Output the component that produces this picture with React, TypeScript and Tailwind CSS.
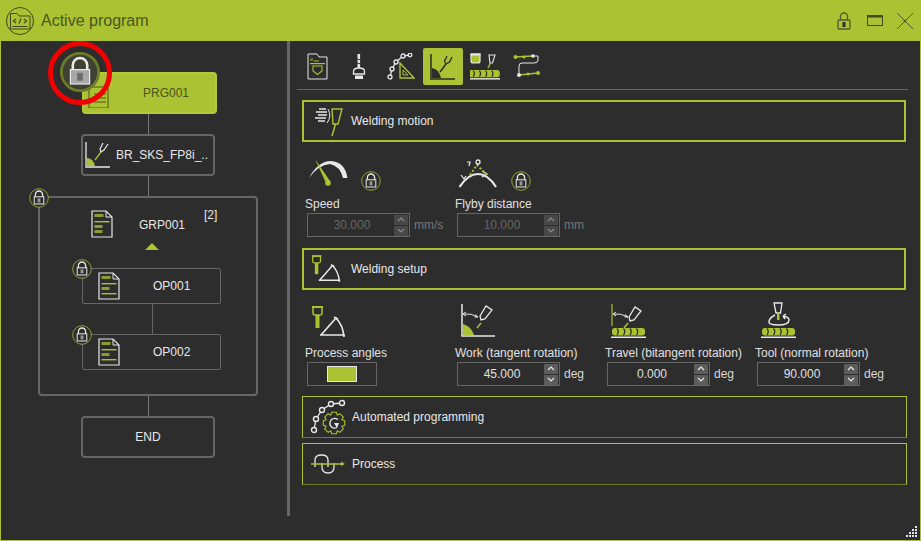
const GREEN = '#abc232';
const WHITE = '#e8e8e8';

const LockBadge = ({ size = 20, big = false }: { size?: number; big?: boolean }) => (
  <svg width={size} height={size} viewBox="0 0 20 20" fill="none">
    <circle cx="10" cy="10" r="9.300" stroke={big ? '#6d7a2a' : GREEN} strokeWidth={big ? 1.400 : 0.800} fill={big ? '#3e4032' : '#2d2d2d'} />
    <path d="M6.400 9V6.600a3.600 3.600 0 0 1 7.200 0V9" stroke={WHITE} strokeWidth="1.300" />
    <rect x="5.200" y="8.800" width="9.600" height="7.200" fill={big ? '#a8a8a8' : '#2d2d2d'} stroke={WHITE} strokeWidth={big ? 0.600 : 1} />
    <rect x="8.600" y="10.400" width="2.800" height="4" fill={big ? '#6c6c6c' : '#999'} />
  </svg>
);

const DocIcon = ({ group = false }: { group?: boolean }) => (
  <svg width="22" height="28" viewBox="0 0 22 28" fill="none">
    <path d="M1 1H15L21 7V27H1Z" fill="#2d2d2d" stroke={WHITE} strokeWidth="1.200" />
    <path d="M15 1V7H21" stroke={WHITE} strokeWidth="1" />
    <rect x="3.500" y="4" width="9" height="3" fill={GREEN} opacity="0.750" />
    <rect x="3.500" y="11" width="15" height="1.400" fill={GREEN} />
    <rect x="3.500" y="15" width="8" height="3" fill={GREEN} opacity="0.750" />
    {group ? (
      <rect x="3.500" y="20" width="8" height="3" fill={GREEN} opacity="0.750" />
    ) : (
      <rect x="3.500" y="21" width="15" height="1.400" fill={GREEN} />
    )}
  </svg>
);

const Bead = () => (
  <g>
    <rect x="1" y="-1" width="33" height="7.500" rx="3" fill={GREEN} />
    <path d="M6 -0.500q2.500 3 0 6.500M12.500 -0.500q2.500 3 0 6.500M19 -0.500q2.500 3 0 6.500M25.500 -0.500q2.500 3 0 6.500" stroke="#2d2d2d" strokeWidth="1.300" />
    <rect x="0" y="7.500" width="35" height="1.500" fill={WHITE} />
  </g>
);

const TabFolder = () => (
  <svg width="21" height="27" viewBox="0 0 21 27" fill="none">
    <path d="M1 26V1H10L12 4H20V26Z" stroke={WHITE} strokeWidth="1" />
    <path d="M3 7h1M5 5v3M7 8h5" stroke={GREEN} strokeWidth="1" />
    <rect x="3" y="10" width="15" height="1.200" fill={GREEN} />
    <path d="M6 13H15V18L10.500 21.500L6 18Z" stroke={GREEN} strokeWidth="1.100" />
  </svg>
);

const TabTorch = () => (
  <svg width="14" height="27" viewBox="0 0 14 27" fill="none">
    <rect x="5.500" y="1" width="2.600" height="14" fill={WHITE} />
    <path d="M5 6l4 1M5 10l4 1" stroke="#2d2d2d" strokeWidth="1" />
    <path d="M1.500 21V18.500Q1.500 15 7 15Q12.500 15 12.500 18.500V21Z" stroke={WHITE} strokeWidth="1.300" />
    <rect x="3" y="22.500" width="8" height="3.500" fill={WHITE} />
  </svg>
);

const TabPath = () => (
  <svg width="28" height="27" viewBox="0 0 28 27" fill="none">
    <g stroke={WHITE} strokeWidth="1.300" fill="#2d2d2d">
      <path d="M3 24L5 16L9 9L16 3L23 2" fill="none" />
      <circle cx="3" cy="24" r="2" />
      <circle cx="5" cy="16" r="2" />
      <circle cx="9" cy="9" r="2" />
      <circle cx="16" cy="3" r="2" />
      <circle cx="23" cy="2" r="1.800" />
    </g>
    <path d="M13 10V25H27Z" stroke={GREEN} strokeWidth="1.400" />
    <path d="M16 17V22H21Z" stroke={GREEN} strokeWidth="1" />
  </svg>
);

const TabWork = () => (
  <svg width="26" height="28" viewBox="0 0 26 28" fill="none">
    <path d="M1 1V26H25" stroke="#2d2d2d" strokeWidth="1.500" />
    <path d="M1.800 15Q9 16 11 25H1.800Z" fill="#2d2d2d" />
    <path d="M10 19L16 11" stroke="#2d2d2d" strokeWidth="1.500" />
    <path d="M16 11L14.500 8L17 3M16 11L19.500 9L22 4" stroke="#2d2d2d" strokeWidth="1.300" />
  </svg>
);

const TabWeld = () => (
  <svg width="30" height="28" viewBox="0 0 30 28" fill="none">
    <path d="M1 1H10V8Q10 10 8 10H3Q1 10 1 8Z" stroke={WHITE} strokeWidth="1.200" fill={GREEN} />
    <rect x="0.500" y="0.500" width="10" height="2" fill={WHITE} />
    <path d="M19 2H25L22.500 10H20Z" stroke={WHITE} strokeWidth="1.100" />
    <path d="M20.500 10L18 15" stroke={GREEN} strokeWidth="1.400" />
    <g transform="translate(-2.500 18) scale(0.950)">
      <Bead />
    </g>
  </svg>
);

const TabRoute = () => (
  <svg width="28" height="26" viewBox="0 0 28 26" fill="none">
    <path d="M20 2H25V6Q25 9 21 9H9Q6 9 6 12V20" stroke={WHITE} strokeWidth="1" />
    <path d="M1 3L20 2" stroke={GREEN} strokeWidth="1.300" />
    <circle cx="2.500" cy="3" r="2" fill={GREEN} />
    <circle cx="11" cy="3" r="1.500" fill={GREEN} />
    <circle cx="20" cy="2" r="1.800" fill={WHITE} />
    <path d="M6 21L25 19" stroke={GREEN} strokeWidth="1.300" />
    <circle cx="6" cy="21" r="2" fill={WHITE} />
    <circle cx="15" cy="20" r="1.500" fill={GREEN} />
    <circle cx="25" cy="19" r="2" fill={GREEN} />
  </svg>
);

const MotionIcon = () => (
  <svg width="32" height="31" viewBox="0 0 32 31" fill="none">
    <path d="M7 3H14M4 6H15M6 9H15M3 12H14M6 15H13" stroke={WHITE} strokeWidth="1.500" />
    <path d="M16 3Q20 10 15 17" stroke={WHITE} strokeWidth="1" />
    <path d="M20 3H30L26 18H21Z" stroke={GREEN} strokeWidth="1.400" />
    <path d="M23.500 18L20 30" stroke={GREEN} strokeWidth="1.500" />
  </svg>
);

const SetupIcon = ({ large = false }: { large?: boolean }) => (
  <svg width={large ? 36 : 31} height={large ? 32 : 28} viewBox="0 0 36 32" fill="none">
    <path d="M2 1H11V7Q11 9 9 9H4Q2 9 2 7Z" stroke={GREEN} strokeWidth="1.500" />
    <rect x="1" y="0" width="11" height="2" fill={GREEN} />
    <rect x="4.500" y="9" width="4" height="13" fill={GREEN} />
    <path d="M9 29H34M10 29L25 12M25 12Q32 19 33 31" stroke={WHITE} strokeWidth="1.700" />
    <path d="M23 11L27 13" stroke={WHITE} strokeWidth="1.500" />
  </svg>
);

const SpeedIcon = () => (
  <svg width="40" height="30" viewBox="0 0 40 30" fill="none">
    <path d="M0 19Q9 2 22 2Q36 3 38.500 19L34 19Q31 7 21 5Q9 6 0 19Z" fill={WHITE} />
    <path d="M6 0L21 22L17 24Z" fill={GREEN} />
    <circle cx="19" cy="24" r="2.800" fill={GREEN} />
  </svg>
);

const FlybyIcon = () => (
  <svg width="38" height="30" viewBox="0 0 38 30" fill="none">
    <path d="M0.500 28Q9 15 19 15Q29 15 37 28" stroke={WHITE} strokeWidth="2.200" />
    <path d="M23 12L28 15L23 18" stroke={WHITE} strokeWidth="1.300" />
    <path d="M11 16L18 6L28 16" stroke={GREEN} strokeWidth="2" strokeDasharray="2 2" />
    <circle cx="19" cy="3" r="2" stroke={WHITE} strokeWidth="1.300" />
    <path d="M8 3H11L10 7M2 16L5 20L7 17" stroke={WHITE} strokeWidth="1.200" />
  </svg>
);

const WorkIcon = () => (
  <svg width="34" height="34" viewBox="0 0 34 34" fill="none">
    <path d="M1 0V32H34" stroke={WHITE} strokeWidth="1.500" />
    <path d="M1.800 20Q10 22 13 31H1.800Z" fill={GREEN} />
    <path d="M2 10Q10 9 17 13M2 10l3-2M2 10l3 2M17 13l-3-2.500M17 13l-3.500 0" stroke={WHITE} strokeWidth="1" />
    <path d="M20 19L16 24" stroke={GREEN} strokeWidth="1.500" />
    <path d="M19 12L25 2L31 6L24 15L20 16Z" stroke={WHITE} strokeWidth="1.300" />
  </svg>
);

const TravelIcon = () => (
  <svg width="36" height="34" viewBox="0 0 36 34" fill="none">
    <path d="M1 0V22" stroke={GREEN} strokeWidth="1.200" />
    <path d="M2 10Q10 9 17 13M2 10l3-2M2 10l3 2M17 13l-3-2.500M17 13l-3.500 0" stroke={WHITE} strokeWidth="1" />
    <path d="M17 19L13 24" stroke={GREEN} strokeWidth="1.500" />
    <path d="M18 13L24 3L30 7L23 16L19 17Z" stroke={WHITE} strokeWidth="1.300" />
    <g transform="translate(0 25)">
      <Bead />
    </g>
  </svg>
);

const ToolIcon = () => (
  <svg width="36" height="36" viewBox="0 0 36 36" fill="none">
    <path d="M13 1H21L19.500 11H15Z" stroke={WHITE} strokeWidth="1.300" />
    <rect x="16" y="11" width="2.500" height="7" fill={GREEN} />
    <path d="M14 13Q8 16 8 20Q8 23 17 23Q28 23 28 18Q28 15 22 14M22 14l3-2M22 14l2 3" stroke={WHITE} strokeWidth="1.500" />
    <g transform="translate(0 27)">
      <Bead />
    </g>
  </svg>
);

// gear outline: 8 teeth around (cx, cy)
const gearPath = (cx: number, cy: number, outer: number, inner: number) => {
  const pts: string[] = [];
  for (let i = 0; i < 8; i++) {
    const a = (i * Math.PI) / 4;
    [[-0.39, inner], [-0.22, outer], [0.22, outer], [0.39, inner]].forEach(([d, r]) => {
      pts.push(`${(cx + r * Math.cos(a + d)).toFixed(2)} ${(cy + r * Math.sin(a + d)).toFixed(2)}`);
    });
  }
  return `M${pts.join('L')}Z`;
};

const AutoIcon = () => (
  <svg width="36" height="36" viewBox="0 0 36 36" fill="none">
    <path d="M4 31L6 20L12 11L21 5L32 4" stroke={WHITE} strokeWidth="1.300" />
    {[[4, 31], [6, 20], [12, 11], [21, 5], [32, 4]].map(([cx, cy]) => (
      <circle key={cx} cx={cx} cy={cy} r="2.500" stroke={WHITE} strokeWidth="1.400" fill="#2d2d2d" />
    ))}
    <path d={gearPath(24, 24, 11, 8.500)} stroke={GREEN} strokeWidth="1.100" fill="#2d2d2d" />
    <path d="M28 20.500Q24 18 21 21Q18.500 25 21.500 28Q24 30 27 28.500" stroke={WHITE} strokeWidth="1.300" />
    <path d="M24 24L29 24L27 29Z" fill={WHITE} />
  </svg>
);

const ProcessIcon = () => (
  <svg width="34" height="22" viewBox="0 0 34 22" fill="none">
    <path d="M4 14V7Q4 2 10.500 2Q17 2 17 7V14M11 10V14Q11 20 17 20Q23 20 23 14V10" stroke={WHITE} strokeWidth="1.300" />
    <path d="M0 11H31" stroke={GREEN} strokeWidth="1.500" />
    <path d="M30 8.500L34 11L30 13Z" fill={GREEN} />
  </svg>
);

const Chevron = ({ up, color }: { up: boolean; color: string }) => (
  <svg width="8" height="5" viewBox="0 0 8 5" fill="none">
    <path d={up ? 'M1 4L4 1L7 4' : 'M1 1L4 4L7 1'} stroke={color} strokeWidth="1.200" />
  </svg>
);

const Spin = ({ value, unit, disabled = false }: { value: string; unit: string; disabled?: boolean }) => (
  <div className="flex items-center mt-[2px]">
    <div className={`ml-[2px] flex items-center w-[103px] h-[24px] border border-[#666] ${disabled ? 'text-[#666]' : 'text-[#e0e0e0]'}`}>
      <span className="w-[86px] text-center pl-[2px]">{value}</span>
      <div className="flex flex-col gap-[1px]">
        {[true, false].map((up) => (
          <div key={String(up)} className={`flex items-center justify-center w-[14px] h-[10px] ${disabled ? 'bg-[#484848]' : 'bg-[#5c5c5c]'}`}>
            <Chevron up={up} color={disabled ? '#8a8a8a' : '#e8e8e8'} />
          </div>
        ))}
      </div>
    </div>
    <span className={`ml-[4px] ${disabled ? 'text-[#777]' : 'text-[#d8d8d8]'}`}>{unit}</span>
  </div>
);

const SectionHead = ({ icon, label, thin = false }: { icon: React.ReactNode; label: string; thin?: boolean }) => (
  <div className={`flex items-center h-[42px] border-[#abc232] ${thin ? 'w-[605px] border border-b-[#6e7a30]' : 'w-[604px] border-2'}`}>
    <div className={`flex items-center justify-center shrink-0 ${thin ? 'w-[49px]' : 'w-[47px]'}`}>{icon}</div>
    <span className="text-[#e8e8e8]">{label}</span>
  </div>
);

const Line = ({ h }: { h: string }) => <div className={`w-[1px] ml-[147px] bg-[#777] ${h}`} />;

const Node = ({ label, icon, active = false }: { label: string; icon?: React.ReactNode; active?: boolean }) => (
  <div className={`relative flex items-center h-[42px] rounded-[4px] border-2 ${active ? 'ml-[81px] w-[135px] pl-[33px] bg-[#abc232] border-[#b4ca3c] text-[#4a5420]' : 'ml-[80px] w-[134px] border-[#666] text-[#e8e8e8]'}`}>
    {icon}
    <span className="flex-1 text-center">{label}</span>
  </div>
);

const OpNode = ({ label }: { label: string }) => (
  <div className="relative ml-[42px] flex items-center w-[139px] h-[36px] rounded-[2px] border border-[#666] text-[#e8e8e8] pl-[15px]">
    <DocIcon />
    <span className="ml-[33px]">{label}</span>
    <div className="absolute left-[-11px] top-[-10px]">
      <LockBadge />
    </div>
  </div>
);

const tabs = [
  { key: 'folder', icon: <TabFolder /> },
  { key: 'torch', icon: <TabTorch /> },
  { key: 'path', icon: <TabPath /> },
  { key: 'work', icon: <TabWork />, active: true },
  { key: 'weld', icon: <TabWeld /> },
  { key: 'route', icon: <TabRoute /> },
];

const Col = ({ icon, label, children }: { icon: React.ReactNode; label: string; children: React.ReactNode }) => (
  <div className="w-[150px] shrink-0">
    <div className="h-[42px] flex items-end">{icon}</div>
    <div className="mt-[8px] text-[#e0e0e0] whitespace-nowrap leading-[14px]">{label}</div>
    {children}
  </div>
);

export default function App() {
  return (
    <div className="w-[921px] h-[541px] relative flex flex-col bg-[#2d2d2d] border-x border-b border-[#abc232] overflow-hidden text-[12px] font-['Liberation_Sans',Arial,sans-serif]">
      <div className="flex items-center h-[41px] shrink-0 bg-[#abc232] -mx-px pl-[5px] pr-[8px]">
        <svg width="30" height="30" viewBox="0 0 30 30" fill="none" stroke="#414a1c" strokeWidth="1">
          <circle cx="15" cy="15" r="13.500" />
          <path d="M5.500 23V7.500H12L14 10H25V23Z" />
          <path d="M7.500 20.500H22.500" />
          <path d="M11 13L8.500 15L11 17M19 13L21.500 15L19 17M16 12.500L14 17.500" strokeWidth="1.200" />
        </svg>
        <span className="ml-[6px] text-[16px] text-[#4b5522]">Active program</span>
        <div className="ml-auto flex items-center">
          <svg width="14" height="18" viewBox="0 0 14 18" fill="none" stroke="#545e28" strokeWidth="1.300">
            <path d="M3.500 8V4.500a3.500 3.500 0 0 1 7 0V8" />
            <rect x="1" y="8" width="12" height="9" rx="1" />
            <rect x="5.500" y="10" width="3" height="5" fill="#2d2d2d" stroke="none" />
          </svg>
          <svg className="ml-[16px]" width="16" height="12" viewBox="0 0 16 12" fill="none" stroke="#414a1c">
            <rect x="0.500" y="0.500" width="15" height="10" />
            <rect x="0" y="0" width="16" height="2.500" fill="#414a1c" stroke="none" />
          </svg>
          <svg className="ml-[14px]" width="16" height="16" viewBox="0 0 16 16" fill="none" stroke="#545e28" strokeWidth="1">
            <path d="M0 0L16 16M16 0L0 16" />
            <circle cx="8" cy="8" r="1" fill="#414a1c" />
          </svg>
        </div>
      </div>

      <div className="flex flex-1 min-h-0">
        {/* program tree */}
        <div className="w-[286px] shrink-0 pt-[31px]">
          <Node
            label="PRG001"
            active
            icon={
              <svg className="absolute left-[4px] top-[12px]" width="22" height="22" viewBox="0 0 22 22" fill="none" stroke="#4a5420">
                <path d="M1 1H20V22H1Z" />
                <path d="M6 8H18M6 12H18M6 16H18" />
              </svg>
            }
          />
          <Line h="h-[20px]" />
          <Node
            label="BR_SKS_FP8i_.."
            icon={
              <div className="ml-[2px] shrink-0">
                <svg width="26" height="28" viewBox="0 0 26 28" fill="none">
                  <path d="M1 1V26H25" stroke={WHITE} strokeWidth="1.300" />
                  <path d="M1.800 17Q8 17 10 25H1.800Z" fill={GREEN} />
                  <path d="M10 19L16 11" stroke={GREEN} strokeWidth="1.300" />
                  <path d="M16 11L15 8L18 2M16 11L19 9L23 3" stroke={WHITE} strokeWidth="1.200" />
                </svg>
              </div>
            }
          />
          <Line h="h-[20px]" />
          <div className="relative ml-[37px] w-[220px] h-[200px] rounded-[4px] border-2 border-[#666]">
            <div className="absolute left-[-11px] top-[-10px]">
              <LockBadge />
            </div>
            <div className="flex items-start pl-[51px] pt-[12px]">
              <DocIcon group />
              <span className="ml-[26px] mt-[6px] text-[#e8e8e8]">GRP001</span>
              <span className="ml-[19px] mt-[-4px] text-[#e8e8e8]">[2]</span>
            </div>
            <svg className="ml-[105px] mt-[5px]" width="14" height="8" viewBox="0 0 14 8">
              <path d="M7 0L14 7H0Z" fill={GREEN} />
            </svg>
            <div className="mt-[17px]">
              <OpNode label="OP001" />
              <div className="w-[1px] h-[30px] ml-[112px] bg-[#666]" />
              <OpNode label="OP002" />
            </div>
          </div>
          <Line h="h-[20px]" />
          <Node label="END" />
        </div>

        <div className="w-[3px] h-[475px] shrink-0 bg-[#666]" />

        {/* properties */}
        <div className="flex-1 min-w-0 pl-[7px] pt-[7px]">
          <div className="flex gap-[2px] h-[37px] pr-[11px]">
            {tabs.map((t) => (
              <div key={t.key} className={`flex items-center justify-center w-[40px] rounded-[2px] ${t.active ? 'bg-[#abc232]' : ''}`}>
                {t.icon}
              </div>
            ))}
          </div>
          <div className="h-[1px] mt-[4px] mr-[12px] bg-[#666]" />
          <div className="pl-[5px] pt-[10px]">
            <SectionHead icon={<MotionIcon />} label="Welding motion" />
            <div className="flex pl-[3px] pt-[5px] h-[106px]">
              <Col
                label="Speed"
                icon={
                  <div className="flex items-end ml-[4px]">
                    <SpeedIcon />
                    <div className="ml-[12px] mb-[-2px]">
                      <LockBadge />
                    </div>
                  </div>
                }
              >
                <Spin value="30.000" unit="mm/s" disabled />
              </Col>
              <Col
                label="Flyby distance"
                icon={
                  <div className="flex items-end ml-[4px]">
                    <FlybyIcon />
                    <div className="ml-[14px] mb-[-2px]">
                      <LockBadge />
                    </div>
                  </div>
                }
              >
                <Spin value="10.000" unit="mm" disabled />
              </Col>
            </div>
            <SectionHead
              icon={
                <div className="ml-[-2px]">
                  <SetupIcon />
                </div>
              }
              label="Welding setup"
            />
            <div className="flex pl-[3px] pt-[6px] h-[106px]">
              <Col label="Process angles" icon={<div className="ml-[6px]"><SetupIcon large /></div>}>
                <div className="ml-[2px] mt-[2px] flex items-center justify-center w-[70px] h-[24px] border border-[#666]">
                  <div className="w-[30px] h-[16px] bg-[#abc232] border border-[#e8e8e8]" />
                </div>
              </Col>
              <Col label="Work (tangent rotation)" icon={<div className="ml-[6px]"><WorkIcon /></div>}>
                <Spin value="45.000" unit="deg" />
              </Col>
              <Col label="Travel (bitangent rotation)" icon={<div className="ml-[6px]"><TravelIcon /></div>}>
                <Spin value="0.000" unit="deg" />
              </Col>
              <Col label="Tool (normal rotation)" icon={<div className="ml-[6px]"><ToolIcon /></div>}>
                <Spin value="90.000" unit="deg" />
              </Col>
            </div>
            <div className="flex flex-col gap-[5px]">
              <SectionHead thin icon={<AutoIcon />} label="Automated programming" />
              <SectionHead thin icon={<ProcessIcon />} label="Process" />
            </div>
          </div>
        </div>
      </div>

      {/* locked marker over the first node */}
      <div className="absolute left-[59px] top-[52px]">
        <LockBadge size={40} big />
      </div>
      <div className="absolute left-[47px] top-[41px] w-[64px] h-[64px] rounded-full border-[5px] border-[#f00000]" />

      <svg className="absolute right-[3px] bottom-[3px]" width="11" height="11" viewBox="0 0 11 11" fill="#dfe2ee">
        {[[9, 0], [6, 3], [9, 3], [3, 6], [6, 6], [9, 6], [0, 9], [3, 9], [6, 9], [9, 9]].map(([x, y]) => (
          <rect key={`${x}-${y}`} x={x} y={y} width="2" height="2" />
        ))}
      </svg>
    </div>
  );
}
